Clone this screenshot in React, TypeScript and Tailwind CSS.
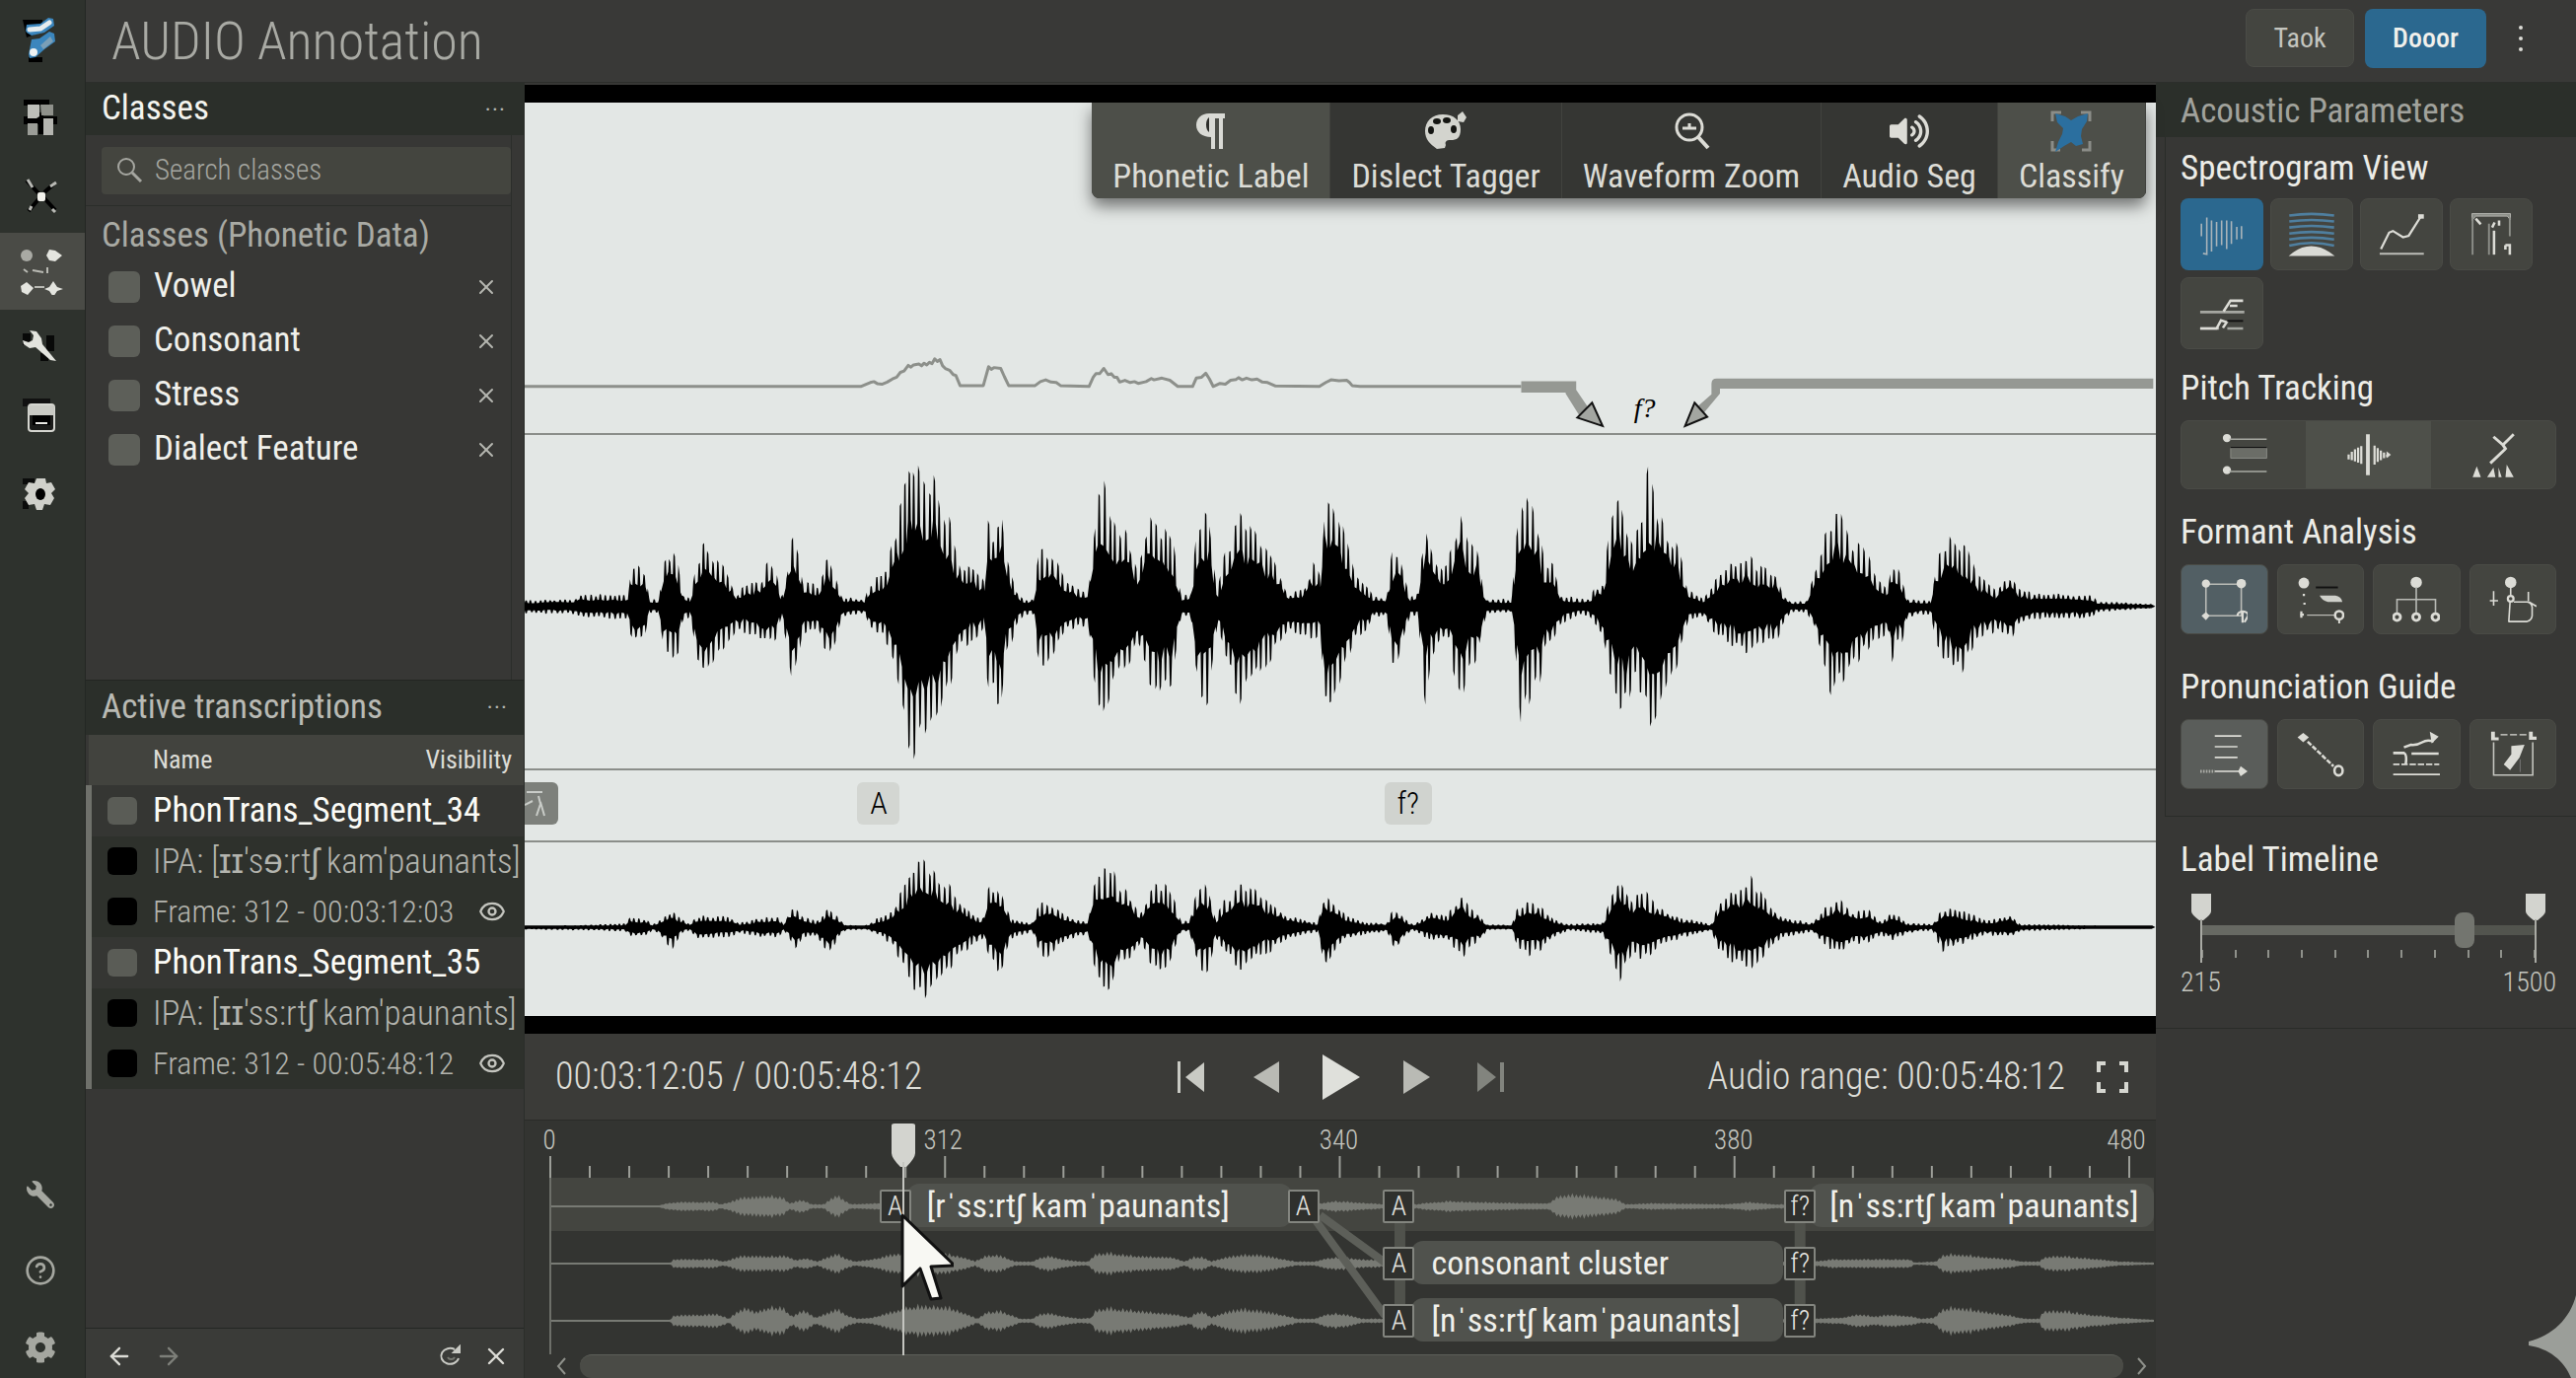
import type { ReactNode } from 'react'
import { ArrowLeft, ArrowRight, X, Eye, CircleHelp } from 'lucide-react'
import { FaWrench, FaCog, FaVolumeUp } from 'react-icons/fa'

type Peak = [number, number, number]
type Level = [number, number]

// [x, top, bottom] on a 3087 unit wide time axis
const mainPeaks: Peak[] = [
  [4, 602, 632], [100, 600, 634], [105, 590, 642], [200, 590, 645], [205, 525, 700], [215, 512, 700], [232, 530, 690],
  [240, 600, 630], [258, 600, 635], [265, 520, 700], [275, 482, 735], [295, 515, 720], [303, 590, 650], [318, 600, 640],
  [328, 520, 730], [345, 470, 775], [365, 500, 735], [385, 525, 710], [405, 590, 670], [425, 560, 680], [450, 560, 690],
  [465, 512, 705], [480, 540, 690], [490, 595, 640], [500, 540, 700], [511, 435, 808], [522, 475, 740], [530, 560, 680],
  [560, 565, 670], [570, 520, 710], [580, 500, 735], [595, 560, 690], [605, 595, 640], [648, 600, 632], [655, 565, 660],
  [690, 530, 700], [710, 405, 790], [728, 300, 950], [740, 283, 955], [760, 320, 925], [775, 298, 910], [787, 320, 900],
  [797, 380, 835], [815, 450, 770], [830, 520, 710], [860, 530, 690], [875, 560, 660], [880, 425, 808], [890, 440, 815],
  [905, 385, 845], [915, 490, 740], [935, 580, 660], [950, 600, 635], [968, 600, 635], [975, 505, 730], [988, 480, 755],
  [1005, 500, 720], [1030, 560, 670], [1070, 580, 660], [1078, 480, 760], [1088, 350, 845], [1100, 338, 855],
  [1120, 410, 800], [1150, 465, 750], [1165, 520, 700], [1185, 410, 780], [1197, 430, 825], [1215, 432, 795],
  [1230, 460, 800], [1240, 540, 700], [1247, 590, 640], [1265, 590, 640], [1275, 450, 780], [1285, 415, 830],
  [1297, 408, 835], [1307, 500, 740], [1315, 580, 660], [1330, 490, 740], [1357, 408, 832], [1370, 415, 800],
  [1395, 460, 770], [1420, 500, 730], [1440, 560, 690], [1450, 590, 670], [1480, 575, 690], [1497, 510, 690],
  [1510, 550, 680], [1518, 362, 840], [1530, 350, 865], [1545, 400, 820], [1560, 470, 750], [1575, 540, 690],
  [1600, 570, 670], [1610, 595, 640], [1635, 595, 640], [1645, 495, 740], [1657, 482, 755], [1670, 550, 680],
  [1680, 595, 640], [1695, 580, 640], [1700, 500, 740], [1709, 420, 842], [1720, 485, 740], [1740, 530, 700],
  [1755, 500, 700], [1762, 460, 770], [1774, 375, 838], [1788, 450, 770], [1808, 475, 740], [1818, 570, 670],
  [1825, 600, 635], [1872, 600, 630], [1880, 460, 730], [1890, 350, 895], [1907, 375, 830], [1925, 440, 790],
  [1935, 510, 720], [1950, 515, 700], [1965, 590, 660], [2000, 600, 635], [2020, 600, 640], [2030, 570, 660],
  [2045, 570, 690], [2055, 450, 770], [2075, 342, 840], [2090, 425, 860], [2105, 455, 790], [2120, 400, 830],
  [2130, 295, 888], [2150, 390, 875], [2165, 435, 815], [2185, 465, 750], [2195, 510, 710], [2205, 580, 650],
  [2235, 600, 640], [2260, 545, 690], [2285, 520, 700], [2317, 495, 732], [2340, 525, 700], [2372, 540, 700],
  [2385, 590, 660], [2400, 605, 630], [2430, 605, 630], [2442, 545, 660], [2455, 490, 710], [2470, 425, 780],
  [2478, 410, 828], [2488, 382, 800], [2500, 415, 805], [2515, 465, 770], [2535, 470, 730], [2560, 540, 690],
  [2585, 570, 680], [2591, 512, 745], [2600, 520, 710], [2610, 550, 700], [2622, 600, 640], [2665, 605, 635],
  [2675, 510, 700], [2695, 455, 755], [2720, 485, 775], [2733, 478, 745], [2750, 540, 700], [2790, 580, 670],
  [2805, 548, 695], [2820, 550, 690], [2830, 570, 660], [2860, 588, 645], [2970, 590, 645], [2980, 605, 630],
  [3080, 611, 621], [3090, 614, 616],
]

const lowPeaks: Peak[] = [
  [4, 1341, 1350], [110, 1340, 1352], [195, 1336, 1354], [203, 1320, 1368], [235, 1326, 1364], [245, 1340, 1352],
  [262, 1325, 1365], [280, 1308, 1400], [300, 1323, 1360], [315, 1338, 1352], [330, 1320, 1370], [390, 1318, 1368],
  [410, 1335, 1358], [450, 1323, 1367], [485, 1323, 1367], [495, 1338, 1352], [505, 1305, 1370], [517, 1294, 1402],
  [530, 1320, 1368], [555, 1330, 1365], [580, 1300, 1407], [600, 1325, 1365], [612, 1340, 1352], [650, 1340, 1350],
  [670, 1325, 1360], [700, 1310, 1385], [712, 1270, 1420], [740, 1208, 1482], [760, 1182, 1519], [780, 1212, 1488],
  [800, 1238, 1452], [820, 1270, 1420], [850, 1315, 1385], [872, 1325, 1370], [882, 1253, 1410], [897, 1243, 1442],
  [908, 1272, 1440], [925, 1325, 1370], [965, 1335, 1355], [975, 1300, 1390], [990, 1282, 1420], [1010, 1303, 1390],
  [1040, 1325, 1370], [1070, 1330, 1360], [1082, 1230, 1440], [1100, 1216, 1482], [1117, 1196, 1485], [1130, 1248, 1430],
  [1155, 1278, 1415], [1170, 1310, 1380], [1195, 1248, 1442], [1218, 1243, 1442], [1235, 1288, 1395], [1247, 1330, 1355],
  [1262, 1330, 1355], [1275, 1268, 1420], [1287, 1238, 1450], [1300, 1273, 1440], [1312, 1325, 1370], [1325, 1288, 1400],
  [1362, 1246, 1442], [1387, 1258, 1415], [1415, 1288, 1400], [1450, 1320, 1370], [1505, 1335, 1355], [1515, 1280, 1420],
  [1522, 1268, 1437], [1545, 1300, 1390], [1560, 1320, 1370], [1600, 1335, 1360], [1635, 1335, 1355], [1645, 1310, 1380],
  [1653, 1304, 1400], [1670, 1325, 1365], [1685, 1338, 1352], [1720, 1310, 1375], [1750, 1318, 1375], [1765, 1288, 1395],
  [1778, 1266, 1414], [1795, 1298, 1390], [1818, 1325, 1370], [1825, 1338, 1352], [1872, 1340, 1350], [1882, 1300, 1385],
  [1902, 1286, 1412], [1930, 1298, 1395], [1950, 1325, 1370], [1980, 1338, 1352], [2045, 1335, 1360], [2055, 1290, 1400],
  [2077, 1230, 1464], [2100, 1278, 1410], [2122, 1258, 1422], [2150, 1298, 1390], [2190, 1323, 1370], [2250, 1338, 1352],
  [2262, 1290, 1400], [2295, 1258, 1427], [2325, 1230, 1447], [2350, 1278, 1410], [2380, 1320, 1370], [2440, 1335, 1355],
  [2465, 1298, 1385], [2493, 1278, 1407], [2515, 1310, 1385], [2545, 1303, 1380], [2570, 1330, 1362], [2595, 1310, 1375],
  [2620, 1335, 1358], [2668, 1338, 1352], [2687, 1300, 1402], [2730, 1310, 1380], [2770, 1330, 1362], [2815, 1316, 1368],
  [2835, 1338, 1354], [2950, 1340, 1350], [3085, 1344, 1346], [3090, 1344, 1346],
]

const trackLevels: Level[][] = [
  [
    [0, 1], [110, 1], [117, 3], [128, 4], [165, 4], [172, 2], [185, 5], [192, 8], [210, 9], [222, 10], [235, 8], [242, 3],
    [255, 6], [264, 2], [277, 2], [282, 6], [290, 10], [297, 6], [304, 2], [330, 3], [370, 3], [780, 3], [795, 5],
    [810, 4], [830, 3], [845, 2], [878, 2], [885, 3], [912, 5], [940, 4], [990, 3], [1012, 3], [1020, 9], [1035, 11],
    [1060, 9], [1080, 7], [1090, 2], [1120, 3], [1190, 2], [1215, 4], [1240, 2], [1280, 2],
  ],
  [
    [0, 1], [121, 1], [124, 4], [165, 4], [175, 2], [186, 5], [192, 7], [240, 7], [248, 3], [258, 5], [270, 2], [278, 5],
    [290, 9], [298, 5], [308, 2], [325, 4], [345, 8], [355, 10], [385, 11], [400, 9], [418, 6], [430, 2], [440, 7],
    [450, 8], [460, 6], [470, 2], [488, 2], [495, 5], [505, 7], [520, 4], [535, 2], [545, 2], [552, 9], [565, 10],
    [595, 7], [630, 6], [643, 2], [652, 6], [660, 6], [670, 2], [680, 5], [700, 8], [718, 8], [738, 5], [755, 2],
    [775, 2], [785, 5], [800, 6], [820, 4], [850, 3], [1283, 2], [1300, 4], [1340, 4], [1378, 4], [1383, 1], [1405, 2],
    [1412, 8], [1425, 9], [1445, 7], [1480, 4], [1492, 2], [1510, 2], [1515, 6], [1530, 7], [1560, 5], [1590, 2], [1626, 1],
  ],
  [
    [0, 1], [121, 1], [124, 5], [170, 6], [180, 2], [190, 9], [198, 12], [207, 8], [222, 13], [235, 12], [245, 4],
    [256, 10], [268, 3], [280, 7], [290, 11], [300, 5], [310, 2], [325, 3], [345, 8], [362, 13], [385, 14], [405, 12],
    [420, 7], [432, 2], [442, 8], [455, 9], [465, 6], [475, 2], [488, 2], [495, 6], [505, 7], [522, 4], [535, 2],
    [548, 3], [552, 10], [565, 12], [600, 9], [635, 6], [648, 3], [655, 8], [662, 8], [670, 3], [680, 7], [700, 11],
    [720, 9], [745, 5], [758, 2], [775, 2], [785, 6], [797, 7], [815, 4], [822, 2], [850, 2], [1283, 2], [1310, 3],
    [1325, 6], [1345, 4], [1360, 6], [1380, 4], [1390, 2], [1403, 3], [1412, 11], [1425, 13], [1445, 10], [1480, 5],
    [1495, 2], [1510, 2], [1514, 9], [1535, 9], [1560, 6], [1590, 3], [1626, 1],
  ],
]

const noise = (n: number) => {
  const v = Math.sin(n * 127.1) * 43758.5453
  return v - Math.floor(v)
}

function lerp(points: number[][], x: number, k: number) {
  let i = 1
  while (i < points.length - 1 && points[i][0] < x) i++
  const a = points[i - 1]
  const b = points[i]
  const t = Math.min(1, Math.max(0, (x - a[0]) / (b[0] - a[0])))
  return a[k] + (b[k] - a[k]) * t
}

// one side of the signal: a solid core with thin needles standing out of it
function needles(peaks: Peak[], mid: number, side: number) {
  const out: string[] = []
  const dir = side === 1 ? -1 : 1
  let x = 4
  let n = side * 500
  while (x <= 3082) {
    const core = 0.46 + noise(n) * 0.2
    const tall = 0.82 + noise(n + 17) * 0.24
    const put = (px: number, f: number) => {
      const amp = Math.abs(lerp(peaks, px, side) - mid)
      out.push(`${px.toFixed(1)} ${(mid + dir * Math.max(4, amp * f)).toFixed(1)}`)
    }
    put(x, core)
    put(x + 1.5, tall)
    put(x + 4, tall * 0.97)
    put(x + 5.5, core)
    x += 8 + noise(n + 41) * 3
    n++
  }
  return out
}

function spikes(peaks: Peak[], mid: number) {
  return `M${needles(peaks, mid, 1).join('L')}L3090 ${mid}L${needles(peaks, mid, 2).reverse().join('L')}Z`
}

function ripple(levels: Level[]) {
  const top: string[] = []
  const bottom: string[] = []
  for (let x = 0; x <= 1626; x += 2) {
    const level = lerp(levels, x, 1)
    const a = level <= 1 ? 1 : level * (x % 4 === 0 ? 1.05 + noise(x) * 0.25 : 0.8)
    top.push(`${x} ${(29 - a).toFixed(1)}`)
    bottom.unshift(`${x} ${(29 + a).toFixed(1)}`)
  }
  return `M${top.join('L')}L${bottom.join('L')}Z`
}

// ---------- icons ----------

function Glyph({ children, size = 'size-12' }: { children: ReactNode; size?: string }) {
  return (
    <svg viewBox="0 0 150 150" className={size} fill="none" stroke="#dcdcd6" strokeWidth="6" aria-hidden="true">
      {children}
    </svg>
  )
}

const Logo = () => (
  <svg viewBox="0 0 40 48" className="h-12 w-10" aria-hidden="true">
    <path d="M2 4h20v12L6 22zM8 42h14v5H8z" fill="#000" />
    <path d="M5 15l1-6 14-1 8-6 5 1 1 7-10 7-13 3-5-3z" fill="#3b86bd" />
    <path d="M9 14l11-1 9-6" stroke="#e6ecee" strokeWidth="5" strokeLinecap="round" fill="none" />
    <path d="M8 39l3-15 8-1 10-7 5 2 1 8-11 8-9 8-6 1z" fill="#3b86bd" />
    <path d="M20 30l10-9 3 5-10 8z" fill="#7b9fb6" />
    <circle cx="13" cy="37" r="4" fill="#eef2f2" />
  </svg>
)

const Blocks = () => (
  <svg viewBox="0 0 40 40" className="size-10" aria-hidden="true">
    <path d="M3 1h26v6H3zM3 18h34v8H3zM18 14h5v22h-5z" fill="#000" />
    <path d="M7 6h12v12l-3 2H7z" fill="#bdbeb9" />
    <path d="M20 6h13v11H21z" fill="#8f918b" />
    <path d="M23 20h10v17H23z" fill="#b4b5b0" />
    <path d="M7 25h10v12H7z" fill="#9b9d97" />
  </svg>
)

const Nodes = () => (
  <svg viewBox="0 0 40 40" className="size-10" aria-hidden="true">
    <path d="M6 5l13 14M8 36l10-12M23 22l12 13M24 17l9-8" stroke="#000" strokeWidth="4" />
    <path d="M7 4l5 8M36 7l-6 4M9 35l2-4M32 34l3 3" stroke="#b9bab5" strokeWidth="3" />
    <rect x="17" y="17" width="8" height="9" rx="2" fill="#f2f2ec" />
  </svg>
)

const Cluster = () => (
  <svg viewBox="0 0 48 48" className="size-12" aria-hidden="true">
    <circle cx="10" cy="8" r="6" fill="#a9aaa4" />
    <path d="M33 2l6 1 7 5-7 6-6-1-3-5z" fill="#e4e5df" />
    <path d="M10 35l7 6-6 7-6-3-1-6z" fill="#e4e5df" />
    <path d="M37 34l4 6 6 2-6 2-4 6-4-6-5-2 5-2z" fill="#e4e5df" />
    <path d="M7 22l4 3M16 23l11 2M31 20v6M18 40h10" stroke="#b9bab3" strokeWidth="2" />
  </svg>
)

const Window = () => (
  <svg viewBox="0 0 40 40" className="size-10" aria-hidden="true">
    <path d="M2 2h28v8H2z" fill="#111" />
    <rect x="8" y="8" width="26" height="27" rx="3" fill="#1b1c1a" stroke="#d5d6d0" strokeWidth="2" />
    <path d="M8 9h26v10H8z" fill="#c9cac4" />
    <path d="M12 19h18v10H12z" fill="#000" />
    <path d="M15 27h12" stroke="#e9e9e4" strokeWidth="2" />
  </svg>
)

const BoldWrench = () => (
  <svg viewBox="0 0 40 40" className="size-10" aria-hidden="true">
    <path d="M2 8h8v12H2zM26 10h8v16h-8zM20 28h8v8h-8z" fill="#080908" />
    <path d="M9 5l7 1 5 7 1 6 14 17-6-1-15-13-6 1-6-4-1-4 6 2 4-2 1-5z" fill="#e3e4de" />
  </svg>
)

const Gear = () => (
  <svg viewBox="0 0 40 40" className="size-10" aria-hidden="true">
    <path d="M2 4h12v6H2zM2 27h6v8H2z" fill="#0b0c0b" />
    <path
      d="M16 4h9l1 5 5-1 4 7-4 4 3 5-4 7-6-1-2 6h-6l-2-6-6 1-4-7 4-5-4-4 4-7 6 1z"
      fill="#cfd0ca"
    />
    <ellipse cx="20" cy="20" rx="5" ry="6" fill="#000" />
  </svg>
)

const Pilcrow = () => (
  <svg viewBox="0 0 32 38" className="h-[38px] w-8" aria-hidden="true">
    <path d="M14 1h16v5h-2v31h-4V6h-4v31h-4V25C7 25 1 20 1 13S6 1 14 1z" fill="#d9dad5" />
    <path d="M14 5v15c-4-2-4-13 0-15z" fill="#2c2d2a" />
  </svg>
)

const Palette = () => (
  <svg viewBox="0 0 44 40" className="h-10 w-11" aria-hidden="true">
    <path d="M19 3c11 0 18 6 18 15 0 9-4 11-10 11-5 0-6 2-5 5l-1 3-8 1C6 33 1 28 1 20 1 10 8 3 19 3z" fill="#d3d4ce" />
    <path d="M34 4l5-4 4 6-3 5-6-1z" fill="#d3d4ce" />
    <g fill="#141512">
      <ellipse cx="7" cy="19" rx="3" ry="4" />
      <ellipse cx="13" cy="10" rx="4" ry="3" />
      <ellipse cx="23" cy="9" rx="4" ry="3" />
      <ellipse cx="30" cy="18" rx="3" ry="4" />
    </g>
  </svg>
)

const Magnifier = () => (
  <svg viewBox="0 0 38 40" className="h-10 w-[38px]" fill="none" stroke="#dcdcd6" strokeWidth="3" aria-hidden="true">
    <circle cx="17" cy="16" r="13" />
    <path d="M26 26l10 11" strokeWidth="4" />
    <path d="M10 17h14M17 12v5" />
  </svg>
)

const ClassifyMark = () => (
  <svg viewBox="0 0 42 44" className="h-11 w-[42px]" aria-hidden="true">
    <path d="M2 12V3h9M31 3h9v9M40 32v9h-8M10 41H2v-9" fill="none" stroke="#8b8d88" strokeWidth="3" />
    <path d="M5 4l10 3 6 4 7-4 10-3-1 8-5 8-1 7 2 8-7 2-5-4-7 4-9 6 3-10 4-8 1-6-6-6z" fill="#2b6f9f" />
  </svg>
)

const SearchMark = () => (
  <svg viewBox="0 0 28 28" className="size-7 shrink-0" fill="none" stroke="#a5a6a0" strokeWidth="2" aria-hidden="true">
    <circle cx="11" cy="10" r="8" />
    <path d="M17 16l9 9" strokeWidth="3" />
  </svg>
)

const Refresh = () => (
  <svg viewBox="0 0 24 24" className="size-6" fill="none" stroke="#c9cac4" strokeWidth="2" aria-hidden="true">
    <path d="M20 14a9 8 0 1 1-4-9" />
    <path d="M15 8l6-6v6z" fill="#c9cac4" />
    <path d="M16 13a4 4 0 0 1-7 0" stroke="#777972" />
  </svg>
)

const specIcons = [
  <Glyph key="bars">
    <path
      d="M10 40v40M27 20v117l-12-3M42 30v98M58 34v78M74 30v78M90 30v90M105 32v72M122 50v40M137 48v40"
      stroke="#a9b4ba"
      strokeWidth="5"
    />
  </Glyph>,
  <Glyph key="arcs">
    <path
      d="M4 14q70-10 142 0M4 33q70-10 142 0M4 52q70-10 142 0M4 71q70-10 142 0M4 90q70-12 142 0M4 109q70-16 142 0"
      stroke="#4f7f9f"
      strokeWidth="8"
    />
    <path d="M2 142q70-62 146 0z" fill="#d9dad5" stroke="none" />
  </Glyph>,
  <Glyph key="trend">
    <path d="M10 120l26-52 12-5 32 20 18-5 38-60" strokeWidth="7" />
    <path d="M128 10h18v14h-18z" fill="#dcdcd6" stroke="none" />
    <path d="M6 135h140" stroke="#bcbdb7" />
  </Glyph>,
  <Glyph key="columns">
    <path d="M14 8h122v20l-10-12H26L14 30z" fill="#8c8e88" stroke="#b5b6b0" strokeWidth="3" />
    <path d="M16 20v118M68 40v98M134 20v60" stroke="#8c8e88" />
    <path d="M84 62v76" strokeWidth="8" />
    <path d="M26 24l16 18M86 36l-8 16M100 30v16M120 108h14v30M120 108v14" strokeWidth="8" />
  </Glyph>,
  <Glyph key="lanes">
    <path d="M6 70h140M6 122h60M92 122h50" stroke="#a5a7a1" strokeWidth="8" />
    <path d="M6 122h52l14-26 18 6-12 18M80 68l22-34h40M100 50h24" strokeWidth="8" />
    <path d="M92 98h50" stroke="#111" />
  </Glyph>,
]

const pitchIcons = [
  <Glyph key="levels">
    <circle cx="22" cy="22" r="13" fill="#dcdcd6" stroke="none" />
    <circle cx="22" cy="124" r="13" fill="#dcdcd6" stroke="none" />
    <path d="M30 26h118M30 128h118" stroke="#a8aaa3" strokeWidth="5" />
    <path d="M34 54h114v32H34z" fill="#6b6d67" stroke="#8b8d86" strokeWidth="3" />
    <path d="M34 52h114" stroke="#111" strokeWidth="4" />
  </Glyph>,
  <Glyph key="cursor">
    <path d="M75 10v130" strokeWidth="12" />
    <path d="M14 74v16M24 66v26M34 58v38M44 52v48M54 48v56M96 46v60M106 54v44M116 62v30M126 68v18M136 74v8" strokeWidth="7" />
    <path d="M134 64l14 11-14 11z" fill="#dcdcd6" stroke="none" />
  </Glyph>,
  <Glyph key="branch">
    <path d="M140 10l-34 34-30-26M106 44l8 12-48 46" strokeWidth="9" />
    <path d="M10 146l13-34 13 34zM56 146l20-30 6 30zM92 146v-30l10 30zM114 146l4-40 22 40z" fill="#dcdcd6" stroke="none" />
  </Glyph>,
]

const formantIcons = [
  <Glyph key="box">
    <path d="M18 26h112v100H18z" stroke="#b9bbb6" strokeWidth="5" />
    <g fill="#dcdcd6" stroke="none">
      <circle cx="18" cy="24" r="13" />
      <circle cx="130" cy="24" r="15" />
      <path d="M4 126l14-12 12 12-12 14z" />
    </g>
    <path d="M118 126a16 13 0 1 1 34 0l-12 20M134 112v36" strokeWidth="7" />
  </Glyph>,
  <Glyph key="path">
    <circle cx="22" cy="22" r="17" fill="#dcdcd6" stroke="none" />
    <path d="M22 56v7M24 84v7M14 112v20M10 122h12" strokeWidth="7" />
    <path d="M32 124h88" strokeWidth="3" />
    <path d="M60 36h70" stroke="#111" />
    <path d="M72 62h50q18 2 22 20h-46q-18-4-26-20z" fill="#cfd0ca" stroke="none" />
    <circle cx="134" cy="124" r="13" strokeWidth="8" />
    <path d="M134 138v12" />
  </Glyph>,
  <Glyph key="tree">
    <circle cx="75" cy="20" r="18" fill="#dcdcd6" stroke="none" />
    <path d="M75 34v82M14 116V74h122v42" stroke="#b9bbb6" strokeWidth="5" />
    <circle cx="14" cy="130" r="11" strokeWidth="9" />
    <circle cx="75" cy="130" r="11" strokeWidth="9" />
    <circle cx="136" cy="130" r="11" strokeWidth="9" />
  </Glyph>,
  <Glyph key="loop">
    <circle cx="68" cy="20" r="18" fill="#dcdcd6" stroke="none" />
    <circle cx="68" cy="72" r="9" strokeWidth="7" />
    <path d="M68 34v28M66 82l-4 62M60 144h60q14-4 16-18v-28q-2-14-16-16H78M14 48v46M2 78h26M124 50v30M126 82l24 14" strokeWidth="5" />
  </Glyph>,
]

const guideIcons = [
  <Glyph key="lines">
    <path d="M46 16h84M46 50h72M46 84h72" strokeWidth="5" />
    <path d="M0 128h46" strokeDasharray="5 4" strokeWidth="9" stroke="#a9aba5" />
    <path d="M46 128h80" strokeWidth="5" />
    <path d="M128 112l22 16-22 16-8-16z" fill="#dcdcd6" stroke="none" />
  </Glyph>,
  <Glyph key="segment">
    <path d="M2 20l18-14 18 14-18 16z" fill="#dcdcd6" stroke="none" />
    <path d="M34 34l82 78" strokeDasharray="16 5" strokeWidth="8" />
    <ellipse cx="132" cy="126" rx="13" ry="15" strokeWidth="8" />
  </Glyph>,
  <Glyph key="curve">
    <path d="M2 70h34q10 4 6 34M36 52l22-8q20 2 36-8t36-2M60 72h86" strokeWidth="8" />
    <path d="M118 2l28 16-22 22z" fill="#dcdcd6" stroke="none" />
    <path d="M2 106h146" strokeDasharray="20 6" strokeWidth="5" />
    <path d="M2 138h148" strokeWidth="6" />
  </Glyph>,
  <Glyph key="frame">
    <path d="M14 36v104h124V36" strokeWidth="5" stroke="#c3c4be" />
    <path d="M36 12h84" strokeDasharray="22 8" strokeWidth="4" />
    <path d="M6 2h12v18h12v10H6zM126 2h12v16h12v10h-24z" fill="#dcdcd6" stroke="none" />
    <path d="M70 48l42-4-16 40-30 40-20-18 24-32z" fill="#dcdcd6" stroke="none" />
    <path d="M98 90v40" strokeWidth="3" stroke="#777" />
  </Glyph>,
]

// ---------- left side ----------

const railTop = [
  { label: 'Home', icon: <Logo />, box: 'h-[80px]' },
  { label: 'Layout', icon: <Blocks />, box: 'h-[80px]' },
  { label: 'Nodes', icon: <Nodes />, box: 'h-[76px]' },
  { label: 'Annotate', icon: <Cluster />, box: 'h-[78px] bg-[#4a4b46]' },
  { label: 'Adjust', icon: <BoldWrench />, box: 'h-[72px]' },
  { label: 'Panels', icon: <Window />, box: 'h-[72px]' },
  { label: 'Options', icon: <Gear />, box: 'h-[86px]' },
]

function Rail() {
  return (
    <nav className="flex w-[87px] shrink-0 flex-col border-r border-[#242724] bg-[#2e322d]">
      {railTop.map((item) => (
        <button key={item.label} aria-label={item.label} className={`flex items-center justify-center pr-1 ${item.box}`}>
          {item.icon}
        </button>
      ))}
      <div className="mt-auto flex flex-col text-[#a5a7a0]">
        <button aria-label="Tools" className="flex h-[60px] items-center justify-center pr-1">
          <FaWrench className="size-7 -scale-x-100" />
        </button>
        <button aria-label="Help" className="flex h-[94px] items-center justify-center pr-1">
          <CircleHelp className="size-8" strokeWidth={2} />
        </button>
        <button aria-label="Settings" className="flex h-[62px] items-center justify-center pr-1">
          <FaCog className="size-8" />
        </button>
      </div>
    </nav>
  )
}

const classes = ['Vowel', 'Consonant', 'Stress', 'Dialect Feature']

function ClassesPanel() {
  return (
    <section className="flex flex-[605] flex-col">
      <header className="flex h-[53px] shrink-0 items-center justify-between bg-[#2b2f2a] pr-[18px] pl-4">
        <h2 className="text-[35px] text-[#f4f4ef]">Classes</h2>
        <button aria-label="Classes menu" className="text-2xl tracking-wider text-[#b5b6b0]">···</button>
      </header>
      <div className="flex flex-1 flex-col pr-3">
        <div className="flex flex-1 flex-col border-r border-[#2b2e2a]">
          <div className="h-[72px] border-b border-[#2b2e2a] pt-3 pl-4">
            <div className="flex h-12 items-center gap-3 rounded-sm bg-[#44453f] pl-[14px]">
              <SearchMark />
              <input
                type="search"
                aria-label="Search classes"
                placeholder="Search classes"
                className="w-full bg-transparent text-[29px] font-light outline-none placeholder:text-[#a5a6a0]"
              />
            </div>
          </div>
          <h3 className="mt-2 h-[46px] pl-4 text-[35px] leading-[43px] text-[#a9aaa4]">Classes (Phonetic Data)</h3>
          <ul>
            {classes.map((name) => (
              <li key={name} className="flex h-[55px] items-center justify-between pr-[13px] pl-[23px]">
                <label className="flex items-center gap-[14px] text-[35px] text-[#f0f0eb]">
                  <input type="checkbox" className="size-8 appearance-none rounded-md bg-[#5d5f59]" />
                  {name}
                </label>
                <button aria-label={`Remove ${name}`}>
                  <X className="size-6 text-[#b5b6b0]" strokeWidth={2} />
                </button>
              </li>
            ))}
          </ul>
        </div>
      </div>
    </section>
  )
}

const segments = [
  { name: 'PhonTrans_Segment_34', ipa: "IPA: [ɪɪ'sɘ:rtʃ kam'paunants]", frame: 'Frame: 312 - 00:03:12:03' },
  { name: 'PhonTrans_Segment_35', ipa: "IPA: [ɪɪ'ss:rtʃ kam'paunants]", frame: 'Frame: 312 - 00:05:48:12' },
]

function Swatch({ label, tone }: { label: string; tone: string }) {
  return <input type="checkbox" aria-label={label} className={`block h-7 w-[30px] appearance-none rounded-md ${tone}`} />
}

function TranscriptionsPanel() {
  return (
    <section className="flex flex-[658] flex-col">
      <header className="flex h-14 shrink-0 items-center justify-between border-t border-[#232622] bg-[#2b2f2a] pr-4 pl-4">
        <h2 className="text-[35px] text-[#b9bab4]">Active transcriptions</h2>
        <button aria-label="Transcriptions menu" className="text-2xl tracking-wider text-[#b5b6b0]">···</button>
      </header>
      <table className="w-full table-fixed border-collapse">
        <thead>
          <tr className="h-[51px] bg-[#42433e] text-[26px] text-[#dcdcd6]">
            <th className="w-[65px]" aria-label="Colour" />
            <th className="text-left font-normal">Name</th>
            <th className="w-[140px] pr-3 text-right font-normal">Visibility</th>
          </tr>
        </thead>
        {segments.map((s) => (
          <tbody key={s.name} className="border-l-[6px] border-[#6f716b] bg-[#2e312c]">
            <tr className="h-[52px] bg-[#353633]">
              <td className="pl-4"><Swatch label={s.name} tone="bg-[#5a5c56]" /></td>
              <td colSpan={2} className="text-[35px] leading-none whitespace-nowrap text-[#fbfbf6]">{s.name}</td>
            </tr>
            <tr className="h-[51px]">
              <td className="pl-4"><Swatch label={`${s.name} IPA`} tone="bg-black" /></td>
              <td colSpan={2} className="text-[35px] leading-none font-light whitespace-nowrap text-[#b3b4ae]">{s.ipa}</td>
            </tr>
            <tr className="h-[51px]">
              <td className="pl-4"><Swatch label={`${s.name} frame`} tone="bg-black" /></td>
              <td colSpan={2}>
                <div className="flex items-center justify-between pr-[18px] text-[32px] leading-none font-light text-[#b3b4ae]">
                  {s.frame}
                  <button aria-label={`Show ${s.name}`}>
                    <Eye className="size-7 text-[#c4c5bf]" strokeWidth={2} />
                  </button>
                </div>
              </td>
            </tr>
          </tbody>
        ))}
      </table>
    </section>
  )
}

// ---------- centre ----------

const tools = [
  { label: 'Phonetic Label', icon: <Pilcrow />, on: true },
  { label: 'Dislect Tagger', icon: <Palette />, on: false },
  { label: 'Waveform Zoom', icon: <Magnifier />, on: false },
  { label: 'Audio Seg', icon: <FaVolumeUp className="size-10" />, on: false },
  { label: 'Classify', icon: <ClassifyMark />, on: true },
]

function Toolbar() {
  return (
    <div className="absolute top-0 right-[10px] z-10 flex h-[97px] overflow-hidden rounded-b-lg bg-[#353633] shadow-[0_8px_16px_rgba(0,0,0,0.5)]">
      {tools.map((t) => (
        <button
          key={t.label}
          className={`flex flex-col items-center border-r border-[#41423e] px-[21px] text-[34px] leading-10 text-[#dcdcd6] ${t.on ? 'bg-[#4d4f49]' : ''}`}
        >
          <span className="flex h-[54px] items-center pt-1">{t.icon}</span>
          {t.label}
        </button>
      ))}
    </div>
  )
}

function Canvas() {
  return (
    <section className="relative flex flex-1 flex-col border-y-[18px] border-black bg-[#e3e7e5]">
      <Toolbar />
      <div className="relative flex-[338] border-b-2 border-[#8b8e8a]">
        <svg viewBox="4 -529 3087 753" preserveAspectRatio="none" className="absolute inset-0 size-full" aria-hidden="true">
          <path
            d="M4 117H640L650 112 658 108 665 106 672 111 680 112 690 107 700 100 708 96 715 85 722 82 730 69 735 73 740 68 750 66 755 70 760 64 765 68 770 62 775 65 780 54 785 60 790 56 795 70 800 76 808 80 815 90 820 92 828 115 872 115 882 72 887 78 892 74 905 76 912 95 920 115 970 115 980 106 990 102 1000 107 1010 108 1018 115 1072 117 1080 96 1085 88 1092 88 1100 76 1108 90 1114 88 1120 96 1125 96 1130 107 1140 103 1150 108 1158 106 1165 110 1180 106 1190 99 1195 102 1210 98 1225 103 1240 117 1268 117 1275 98 1285 96 1293 87 1300 100 1307 117 1320 110 1330 112 1340 103 1350 101 1355 97 1362 102 1370 98 1380 102 1390 100 1400 107 1410 108 1425 116 1508 117 1520 108 1530 102 1545 104 1560 103 1565 108 1570 115 1585 117H1890"
            fill="none"
            stroke="#8d908b"
            strokeWidth="3"
            strokeLinejoin="round"
            vectorEffect="non-scaling-stroke"
          />
          <g fill="#959893">
            <path d="M1890 105h104v20l26 46-18 16-28-54v-2h-84z" />
            <path d="M3086 99H2260q-10 0-10 12v24l-40 42 16 14 40-58v-11h820z" />
          </g>
          <g fill="#a3a6a1" stroke="#111" strokeWidth="2">
            <path d="M1996 188l28-34 20 53z" vectorEffect="non-scaling-stroke" />
            <path d="M2218 154l24 32-42 21z" vectorEffect="non-scaling-stroke" />
          </g>
        </svg>
        <span className="absolute bottom-1 left-[68%] font-[cursive] text-[28px] text-black italic">f?</span>
      </div>
      <div className="relative flex-[340] border-b-2 border-[#8b8e8a]">
        <svg viewBox="4 225 3087 761" preserveAspectRatio="none" className="absolute inset-0 size-full" aria-hidden="true">
          <path d={spikes(mainPeaks, 617)} />
        </svg>
      </div>
      <div className="relative flex-[72] border-b-2 border-[#8b8e8a] text-[32px] font-light text-black">
        <span className="absolute top-3 left-0 flex h-[43px] w-[34px] items-center justify-center rounded-r-md bg-[#7d807b]">
          <svg viewBox="0 0 34 43" className="h-full w-full" aria-hidden="true">
            <path d="M2 10h16M0 23l8-4M12 34l4-12-2-8M16 20l4 14" stroke="#c9ccc8" strokeWidth="2" fill="none" />
          </svg>
        </span>
        <span className="absolute top-3 left-[20.4%] flex h-[43px] w-[43px] items-center justify-center rounded-md bg-[#d3d6d2]">A</span>
        <span className="absolute top-3 left-[52.7%] flex h-[43px] w-12 items-center justify-center rounded-md bg-[#d0d3cf]">f?</span>
      </div>
      <div className="relative flex-[177]">
        <svg viewBox="4 1151 3087 396" preserveAspectRatio="none" className="absolute inset-0 size-full" aria-hidden="true">
          <path d={spikes(lowPeaks, 1345)} />
        </svg>
      </div>
    </section>
  )
}

function Transport() {
  return (
    <div className="grid h-[87px] shrink-0 grid-cols-3 items-center bg-[#3b3b38] pr-7 pl-[31px] text-[38px] font-light text-[#dcdcd6]">
      <span>00:03:12:05 / 00:05:48:12</span>
      <div className="flex items-center justify-center">
        <button aria-label="To start" className="flex w-19 justify-center">
          <svg viewBox="0 0 30 32" className="h-8 w-[30px]" fill="#c9cac4"><path d="M1 0h3v32H1zM28 1v30L9 16z" /></svg>
        </button>
        <button aria-label="Back" className="flex w-19 justify-center">
          <svg viewBox="0 0 28 34" className="h-[34px] w-7" fill="#b9bab4"><path d="M27 1v32L1 17z" /></svg>
        </button>
        <button aria-label="Play" className="flex w-19 justify-center">
          <svg viewBox="0 0 38 46" className="h-[46px] w-[38px]" fill="#dfe0db"><path d="M0 0v46l38-23z" /></svg>
        </button>
        <button aria-label="Forward" className="flex w-19 justify-center">
          <svg viewBox="0 0 28 34" className="h-[34px] w-7" fill="#b9bab4"><path d="M1 0v34l27-17z" /></svg>
        </button>
        <button aria-label="To end" className="flex w-19 justify-center">
          <svg viewBox="0 0 30 32" className="h-8 w-[30px]" fill="#82847e"><path d="M1 1v30l19-15zM24 1h4v30h-4z" /></svg>
        </button>
      </div>
      <div className="flex items-center justify-end gap-8">
        <span>Audio range: 00:05:48:12</span>
        <button aria-label="Full screen">
          <svg viewBox="0 0 32 32" className="size-8" fill="none" stroke="#d5d6d0" strokeWidth="4">
            <path d="M2 11V2h7M23 2h7v9M30 21v9h-7M9 30H2v-9" />
          </svg>
        </button>
      </div>
    </div>
  )
}

const rulerLabels: [number, string][] = [[0, '0'], [399, '312'], [800, '340'], [1200, '380'], [1598, '480']]

// horizontal place on the 1626 unit long timeline
const at = (x: number) => ({ left: `${(x / 1626) * 100}%` })
const span = (x: number, w: number) => ({ left: `${(x / 1626) * 100}%`, width: `${(w / 1626) * 100}%` })

const clips = [
  [
    { x: 361, w: 390, text: '[rˈss:rtʃ kamˈpaunants]' },
    { x: 1277, w: 349, text: '[nˈss:rtʃ kamˈpaunants]' },
  ],
  [{ x: 873, w: 377, text: 'consonant cluster' }],
  [{ x: 873, w: 377, text: '[nˈss:rtʃ kamˈpaunants]' }],
]

const marks: [number, string][][] = [
  [[333, 'A'], [747, 'A'], [844, 'A'], [1251, 'f?']],
  [[844, 'A'], [1251, 'f?']],
  [[844, 'A'], [1251, 'f?']],
]

function Timeline() {
  return (
    <section className="flex shrink-0 flex-col border-t border-[#2a2b28] bg-[#333431]">
      <div className="relative mr-0.5 ml-[25px] h-[237px]">
        <div className="relative h-[58px] text-[27px] leading-10 font-light text-[#c4c5bf]">
          {rulerLabels.map(([x, text]) => (
            <span key={text} className="absolute top-0 -translate-x-1/2" style={at(x)}>{text}</span>
          ))}
          <svg viewBox="0 0 1626 22" preserveAspectRatio="none" className="absolute bottom-0 h-[22px] w-full" aria-hidden="true">
            {Array.from({ length: 41 }, (_, i) => (
              <path key={i} d={`M${i * 40 + 1} ${i % 10 ? 10 : 0}V22`} stroke="#9c9e98" strokeWidth="2" />
            ))}
          </svg>
        </div>
        <div className="relative h-[179px] border-l-2 border-[#6d6f69]">
          {/* links between the marks of neighbouring tracks */}
          <svg viewBox="0 0 1626 179" preserveAspectRatio="none" className="absolute inset-0 z-10 size-full" aria-hidden="true">
            <path d="M861 46v82M1267 46v82" stroke="#50524c" strokeWidth="11" />
            <path d="M780 38l66 48M776 44l70 96" stroke="#5d5f59" strokeWidth="8" />
          </svg>
          {trackLevels.map((levels, i) => (
            <div key={i} className="relative h-[58px]">
              <div className={`absolute inset-x-0 top-0 h-[54px] ${i === 0 ? 'bg-[#444540]' : ''}`} />
              <svg viewBox="0 0 1626 58" preserveAspectRatio="none" className="absolute inset-0 size-full" aria-hidden="true">
                <path d={ripple(levels)} fill="#787a74" />
              </svg>
              {clips[i].map((c) => (
                <button
                  key={c.x}
                  className="absolute top-1.5 z-10 flex h-11 items-center rounded-xl bg-[#50524d] pl-5 text-[34px] whitespace-nowrap text-[#f0f0eb]"
                  style={span(c.x, c.w)}
                >
                  {c.text}
                </button>
              ))}
              {marks[i].map(([x, text]) => (
                <span
                  key={x}
                  className="absolute top-3 z-20 flex h-[34px] w-8 items-center justify-center rounded-xs border-2 border-[#83857f] bg-[#2f302d] text-[28px] font-light text-[#e6e6e1]"
                  style={at(x)}
                >
                  {text}
                </span>
              ))}
            </div>
          ))}
        </div>
        <svg viewBox="0 0 64 236" className="absolute top-0.5 z-30 h-[236px] w-16 -translate-x-3" style={at(358)} aria-hidden="true">
          <path d="M1 3q0-2 3-2h18q3 0 3 2v28q0 5-9 14H10Q1 36 1 31z" fill="#d3d4cf" />
          <path d="M13 40v196" stroke="#c4c5c0" strokeWidth="2" />
          <path d="M12 94l53 51-24 1 10 32-10 1-11-31-18 18z" fill="#f8f8f3" stroke="#111" strokeWidth="3" strokeLinejoin="round" />
        </svg>
      </div>
      <div className="flex h-6 items-center gap-2 pr-[5px] pl-[28px] text-[#8f918b]">
        <svg viewBox="0 0 12 18" className="mx-1 h-[18px] w-3" fill="none" stroke="currentColor" strokeWidth="2"><path d="M9 1L2 9l7 8" /></svg>
        <div className="h-6 flex-1 rounded-xl border-t border-[#5d5f59] bg-[#4a4b46]" />
        <svg viewBox="0 0 12 18" className="mx-1 h-[18px] w-3" fill="none" stroke="currentColor" strokeWidth="2"><path d="M3 1l7 8-7 8" /></svg>
      </div>
    </section>
  )
}

// ---------- right side ----------

function Handle({ side }: { side: string }) {
  return (
    <svg viewBox="0 0 20 70" className={`absolute top-0 h-[70px] w-5 ${side}`} aria-hidden="true">
      <path d="M0 0h20v18q0 3-8 9H8q-8-6-8-9z" fill="#d3d4cf" />
      <path d="M10 26v44" stroke="#a9aaa4" strokeWidth="2" />
    </svg>
  )
}

function IconGrid({ icons, active, name }: { icons: ReactNode[]; active: string; name: string }) {
  return (
    <div className="grid grid-cols-4 gap-[9px]">
      {icons.map((icon, i) => (
        <button
          key={i}
          aria-label={`${name} ${i + 1}`}
          className={`flex h-[71px] items-center justify-center rounded-lg border border-[#4a4b46] ${i === 0 ? active : 'bg-[#444540]'}`}
        >
          {icon}
        </button>
      ))}
    </div>
  )
}

function Parameters() {
  return (
    <aside className="flex w-[426px] shrink-0 flex-col bg-[#373735]">
      <h2 className="h-[55px] bg-[#2b2f2a] pl-[25px] text-[35px] leading-[58px] text-[#a1a29c]">Acoustic Parameters</h2>
      <div className="ml-[9px] border-b border-l border-[#2a2c29] pt-3 pr-5 pb-[27px] pl-[15px] text-[35px] leading-10 text-[#ecece7]">
        <h3>Spectrogram View</h3>
        <div className="mt-[10px] flex flex-wrap gap-[7px]">
          {specIcons.map((icon, i) => (
            <button
              key={i}
              aria-label={`Spectrogram ${i + 1}`}
              className={`flex h-[73px] w-21 items-center justify-center rounded-lg ${i === 0 ? 'bg-[#2b688f]' : 'border border-[#4a4b46] bg-[#444540]'}`}
            >
              {icon}
            </button>
          ))}
        </div>
        <h3 className="mt-5">Pitch Tracking</h3>
        <div className="mt-3 grid h-[70px] grid-cols-3 overflow-hidden rounded-lg border border-[#4a4b46] bg-[#444540]">
          {pitchIcons.map((icon, i) => (
            <button
              key={i}
              aria-label={`Pitch ${i + 1}`}
              className={`flex items-center justify-center ${i === 1 ? 'bg-[#4e504a]' : ''}`}
            >
              {icon}
            </button>
          ))}
        </div>
        <h3 className="mt-6 mb-3">Formant Analysis</h3>
        <IconGrid name="Formant" icons={formantIcons} active="bg-[#525f64]" />
        <h3 className="mt-[34px] mb-3">Pronunciation Guide</h3>
        <IconGrid name="Guide" icons={guideIcons} active="bg-[#5a5d5a]" />
      </div>
      <div className="border-b border-[#2a2c29] pt-6 pr-5 pb-[30px] pl-[25px]">
        <label htmlFor="label-timeline" className="block text-[35px] leading-10 text-[#ecece7]">Label Timeline</label>
        <div className="relative mx-[21px] mt-[14px] h-[70px] pt-8">
          <input
            id="label-timeline"
            type="range"
            min={215}
            max={1500}
            defaultValue={1250}
            className="block h-[10px] w-full appearance-none bg-linear-to-r from-[#676963] from-80% to-[#52544e] to-80% [&::-webkit-slider-thumb]:h-9 [&::-webkit-slider-thumb]:w-5 [&::-webkit-slider-thumb]:appearance-none [&::-webkit-slider-thumb]:rounded-lg [&::-webkit-slider-thumb]:bg-[#73756f]"
          />
          <div className="mt-[15px] flex justify-between">
            {Array.from({ length: 11 }, (_, i) => (
              <span key={i} className="h-2 w-0.5 bg-[#8f918b]" />
            ))}
          </div>
          <Handle side="-left-[10px]" />
          <Handle side="-right-[10px]" />
        </div>
        <div className="mt-1 flex justify-between text-[28px] leading-8 font-light text-[#c4c5bf]">
          <span>215</span>
          <span>1500</span>
        </div>
      </div>
      <div className="relative flex-1 overflow-hidden">
        <svg viewBox="0 0 48 84" className="absolute right-0 bottom-0 h-[84px] w-12" aria-hidden="true">
          <path d="M0 47C24 41 42 24 48 0V84H43C36 66 20 54 0 51z" fill="#9b9e99" />
        </svg>
      </div>
    </aside>
  )
}

export default function App() {
  return (
    <div className="flex h-screen min-h-[1200px] overflow-hidden bg-[#373735] font-['Roboto_Condensed',Roboto,sans-serif]">
      <Rail />
      <div className="flex min-w-0 flex-1 flex-col">
        <header className="flex h-[84px] shrink-0 items-center justify-between border-b border-[#2c2e2b] bg-[#393937] pr-10 pl-[26px]">
          <h1 className="text-[54px] leading-none font-light text-[#a9aaa4]">AUDIO Annotation</h1>
          <div className="flex items-center gap-[11px] pb-[6px] text-[28px]">
            <button className="h-[59px] w-[110px] rounded-lg border border-[#4a4b46] bg-[#444540] text-[#c4c5bf]">Taok</button>
            <button className="h-[60px] w-[123px] rounded-lg bg-[#2b688f] font-medium text-[#f0f0eb]">Dooor</button>
            <button aria-label="More" className="ml-2 flex w-8 flex-col items-center gap-[7px]">
              <span className="size-1 rounded-full bg-[#dcdcd6]" />
              <span className="size-1 rounded-full bg-[#dcdcd6]" />
              <span className="size-1 rounded-full bg-[#dcdcd6]" />
            </button>
          </div>
        </header>
        <div className="flex min-h-0 flex-1">
          <aside className="flex w-[445px] shrink-0 flex-col border-r border-[#2b2e2a]">
            <ClassesPanel />
            <TranscriptionsPanel />
            <footer className="flex h-[51px] shrink-0 items-center border-t border-[#242724] bg-[#3a3b38] pt-1.5 pr-[14px] pl-5 text-[#dcdcd6]">
              <button aria-label="Back"><ArrowLeft className="size-7" strokeWidth={2} /></button>
              <button aria-label="Forward" className="ml-[22px] text-[#7d7f79]"><ArrowRight className="size-7" strokeWidth={2} /></button>
              <button aria-label="Refresh" className="ml-auto"><Refresh /></button>
              <button aria-label="Close" className="ml-5"><X className="size-7" strokeWidth={2} /></button>
            </footer>
          </aside>
          <main className="flex min-w-0 flex-1 flex-col pt-0.5">
            <Canvas />
            <Transport />
            <Timeline />
          </main>
          <Parameters />
        </div>
      </div>
    </div>
  )
}
